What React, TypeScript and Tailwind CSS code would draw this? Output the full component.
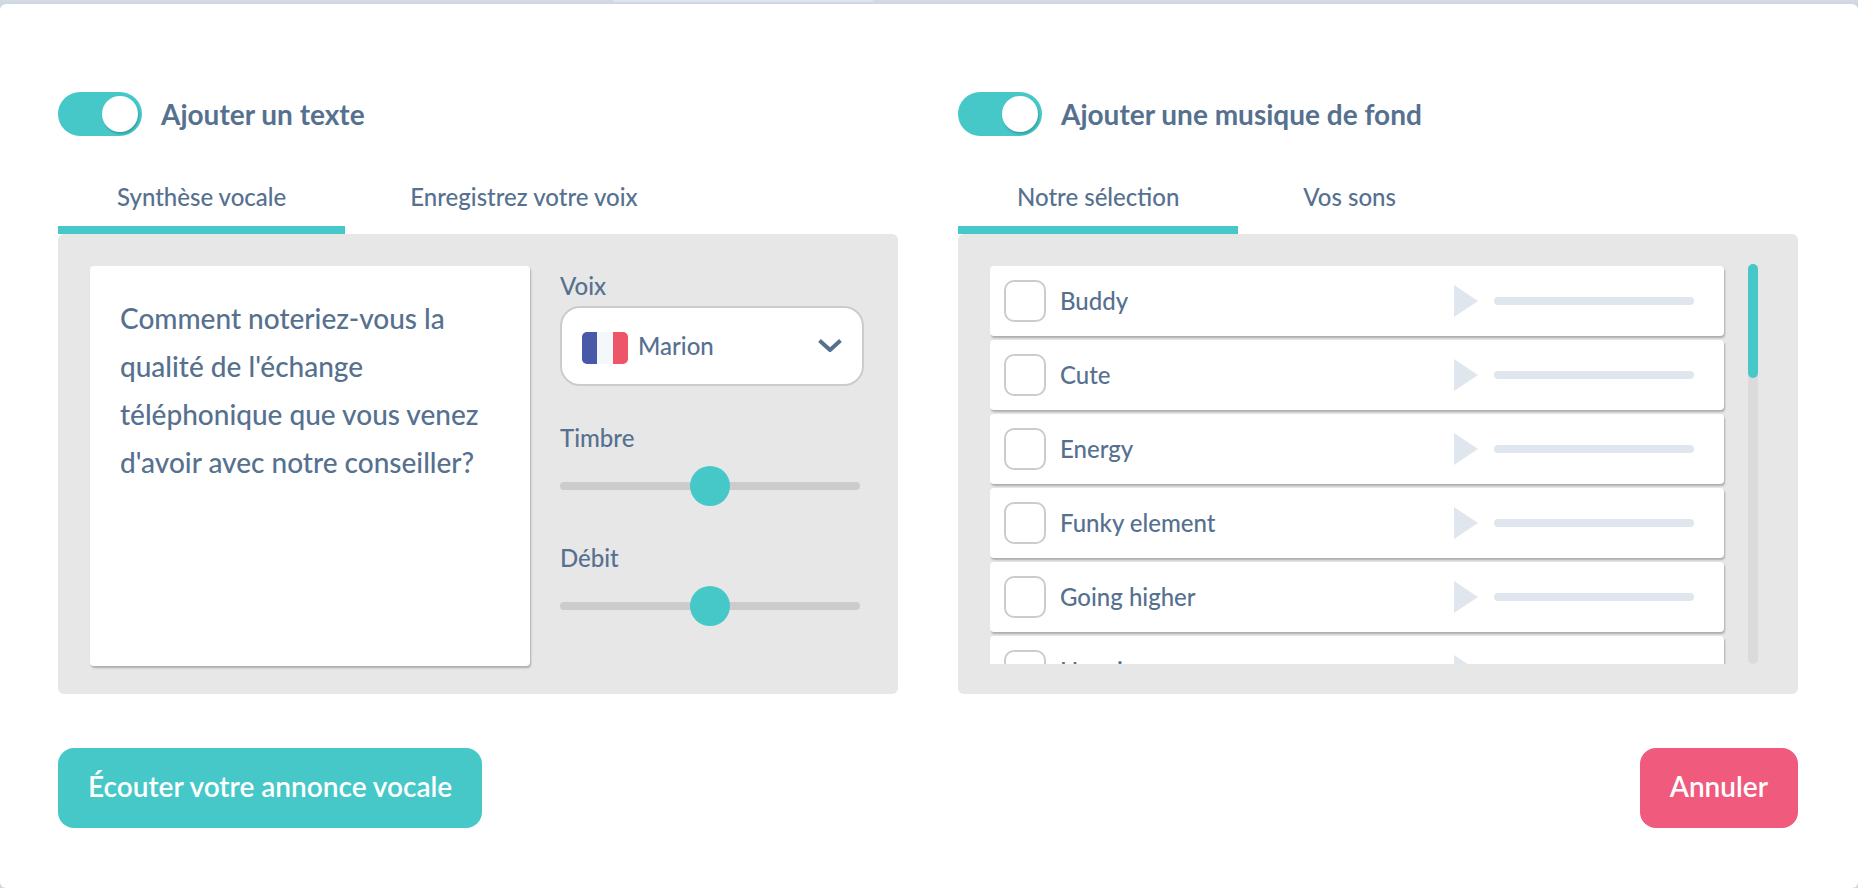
import React, { useState } from 'react';

const TRACKS = ['Buddy', 'Cute', 'Energy', 'Funky element', 'Going higher', 'Happiness'];

const Toggle = ({ id, label }: { id: string; label: string }) => (
  <div className="flex items-center gap-[19px]">
    <span className="grid h-11 w-[84px] shrink-0 items-center">
      <input
        id={id}
        type="checkbox"
        role="switch"
        defaultChecked
        className="peer col-start-1 row-start-1 h-11 w-full cursor-pointer appearance-none rounded-full bg-[#cccccc] checked:bg-[#46c8c8]"
      />
      <span className="pointer-events-none col-start-1 row-start-1 ml-1 size-9 rounded-full bg-white shadow-[1px_2px_2px_rgba(0,0,0,0.2)] peer-checked:ml-11" />
    </span>
    <label htmlFor={id} className="text-[28px] leading-9 font-bold">
      {label}
    </label>
  </div>
);

const Tabs = ({ items }: { items: string[] }) => {
  const [active, setActive] = useState(0);

  return (
    <div role="tablist" className="mt-11 flex gap-1.5">
      {items.map((item, index) => (
        <button
          key={item}
          type="button"
          role="tab"
          aria-selected={index === active}
          onClick={() => setActive(index)}
          className={`border-b-8 px-[59px] pb-3 text-2xl leading-[34px] font-medium ${
            index === active ? 'border-[#46c8c8]' : 'border-transparent'
          }`}
        >
          {item}
        </button>
      ))}
    </div>
  );
};

const Slider = ({ id, label }: { id: string; label: string }) => (
  <div>
    <label htmlFor={id} className="block text-2xl leading-8 font-medium">
      {label}
    </label>
    <input
      id={id}
      type="range"
      min={0}
      max={100}
      defaultValue={50}
      className="mt-3 block h-10 w-[300px] cursor-pointer appearance-none bg-transparent [&::-webkit-slider-runnable-track]:h-2 [&::-webkit-slider-runnable-track]:rounded-full [&::-webkit-slider-runnable-track]:bg-[#cccccc] [&::-webkit-slider-thumb]:-mt-4 [&::-webkit-slider-thumb]:size-10 [&::-webkit-slider-thumb]:appearance-none [&::-webkit-slider-thumb]:rounded-full [&::-webkit-slider-thumb]:bg-[#46c8c8]"
    />
  </div>
);

const VoiceSelect = () => (
  <div>
    <label htmlFor="voice" className="block text-2xl leading-8 font-medium">
      Voix
    </label>
    <div className="mt-1 grid items-center">
      <select
        id="voice"
        className="col-start-1 row-start-1 h-20 w-full appearance-none rounded-[20px] border-2 border-[#cccccc] bg-white pl-[76px] text-2xl font-medium"
      >
        <option>Marion</option>
      </select>
      {/* Flag */}
      <span className="pointer-events-none col-start-1 row-start-1 ml-[22px] mt-1 flex h-8 w-[46px] overflow-hidden rounded-[5px]">
        <span className="flex-1 bg-[#4859a8]" />
        <span className="flex-1 bg-[#f5f8fb]" />
        <span className="flex-1 bg-[#ed5568]" />
      </span>
      {/* Chevron */}
      <svg
        viewBox="0 0 24 14"
        className="pointer-events-none col-start-1 row-start-1 mr-[22px] h-3.5 w-6 justify-self-end"
        fill="none"
        stroke="#56718f"
        strokeWidth="4"
      >
        <path d="M1.5 1.5 L12 11 L22.5 1.5" strokeLinejoin="round" />
      </svg>
    </div>
  </div>
);

const Track = ({ name }: { name: string }) => (
  <li className="flex h-[70px] shrink-0 items-center rounded-[4px] bg-white pr-[30px] pl-3.5 shadow-[1px_2px_2px_rgba(0,0,0,0.25)]">
    <label className="flex flex-1 items-center gap-3.5 text-2xl leading-8 font-medium">
      <input
        type="checkbox"
        className="size-[42px] appearance-none rounded-[10px] border-2 border-[#cccccc] bg-white checked:bg-[#46c8c8]"
      />
      {name}
    </label>
    <button type="button" aria-label={`Lire ${name}`} className="mr-4">
      <svg viewBox="0 0 24 32" className="h-8 w-6" fill="#dfe6ee">
        <path d="M0 0 L24 16 L0 32 Z" />
      </svg>
    </button>
    <span className="h-2 w-[200px] rounded-full bg-[#dfe6ee]" />
  </li>
);

export default function App() {
  return (
    <div className="flex min-h-screen flex-col bg-[#c8d9ec] font-['Lato',sans-serif] text-[#56718f]">
      {/* Page behind the dialog */}
      <div className="mb-0.5 flex h-0.5 bg-[#d9d9d9]">
        <span className="ml-[33%] h-0.5 w-[14%] bg-[#e3e4e7]" />
      </div>

      <main className="flex-1 rounded-md bg-white pt-[88px] pr-[60px] pb-[60px] pl-[58px]">
        <div className="grid grid-cols-2 gap-[60px]">
          <section>
            <Toggle id="text-toggle" label="Ajouter un texte" />
            <Tabs items={['Synthèse vocale', 'Enregistrez votre voix']} />
            <div className="flex gap-[30px] rounded-md bg-[#e7e7e7] pt-8 pr-[34px] pb-7 pl-8">
              <textarea
                aria-label="Texte de l'annonce"
                defaultValue="Comment noteriez-vous la qualité de l'échange téléphonique que vous venez d'avoir avec notre conseiller?"
                className="h-[400px] min-w-0 flex-1 resize-none rounded-[4px] bg-white px-[30px] py-7 text-[28px] leading-[48px] font-medium shadow-[1px_2px_2px_rgba(0,0,0,0.25)]"
              />
              <div className="flex w-[304px] flex-col gap-9 pt-1">
                <VoiceSelect />
                <Slider id="pitch" label="Timbre" />
                <Slider id="rate" label="Débit" />
              </div>
            </div>
          </section>

          <section>
            <Toggle id="music-toggle" label="Ajouter une musique de fond" />
            <Tabs items={['Notre sélection', 'Vos sons']} />
            <div className="flex rounded-md bg-[#e7e7e7] py-[30px] pr-10 pl-8">
              <ul className="flex h-[400px] flex-1 flex-col gap-1 overflow-y-auto pt-0.5 pr-6 [scrollbar-width:none]">
                {TRACKS.map((name) => (
                  <Track key={name} name={name} />
                ))}
              </ul>
              <div className="w-2.5 rounded-[5px] bg-[#dbdbdb]">
                <div className="h-[114px] rounded-[5px] bg-[#46c8c8]" />
              </div>
            </div>
          </section>
        </div>

        <div className="mt-[54px] flex justify-between">
          <button
            type="button"
            className="h-20 rounded-2xl bg-[#46c8c8] px-[30px] pb-1 text-[28px] font-semibold text-white"
          >
            Écouter votre annonce vocale
          </button>
          <button
            type="button"
            className="h-20 rounded-2xl bg-[#f05a7c] px-[30px] pb-1 text-[28px] font-semibold text-white"
          >
            Annuler
          </button>
        </div>
      </main>
    </div>
  );
}
